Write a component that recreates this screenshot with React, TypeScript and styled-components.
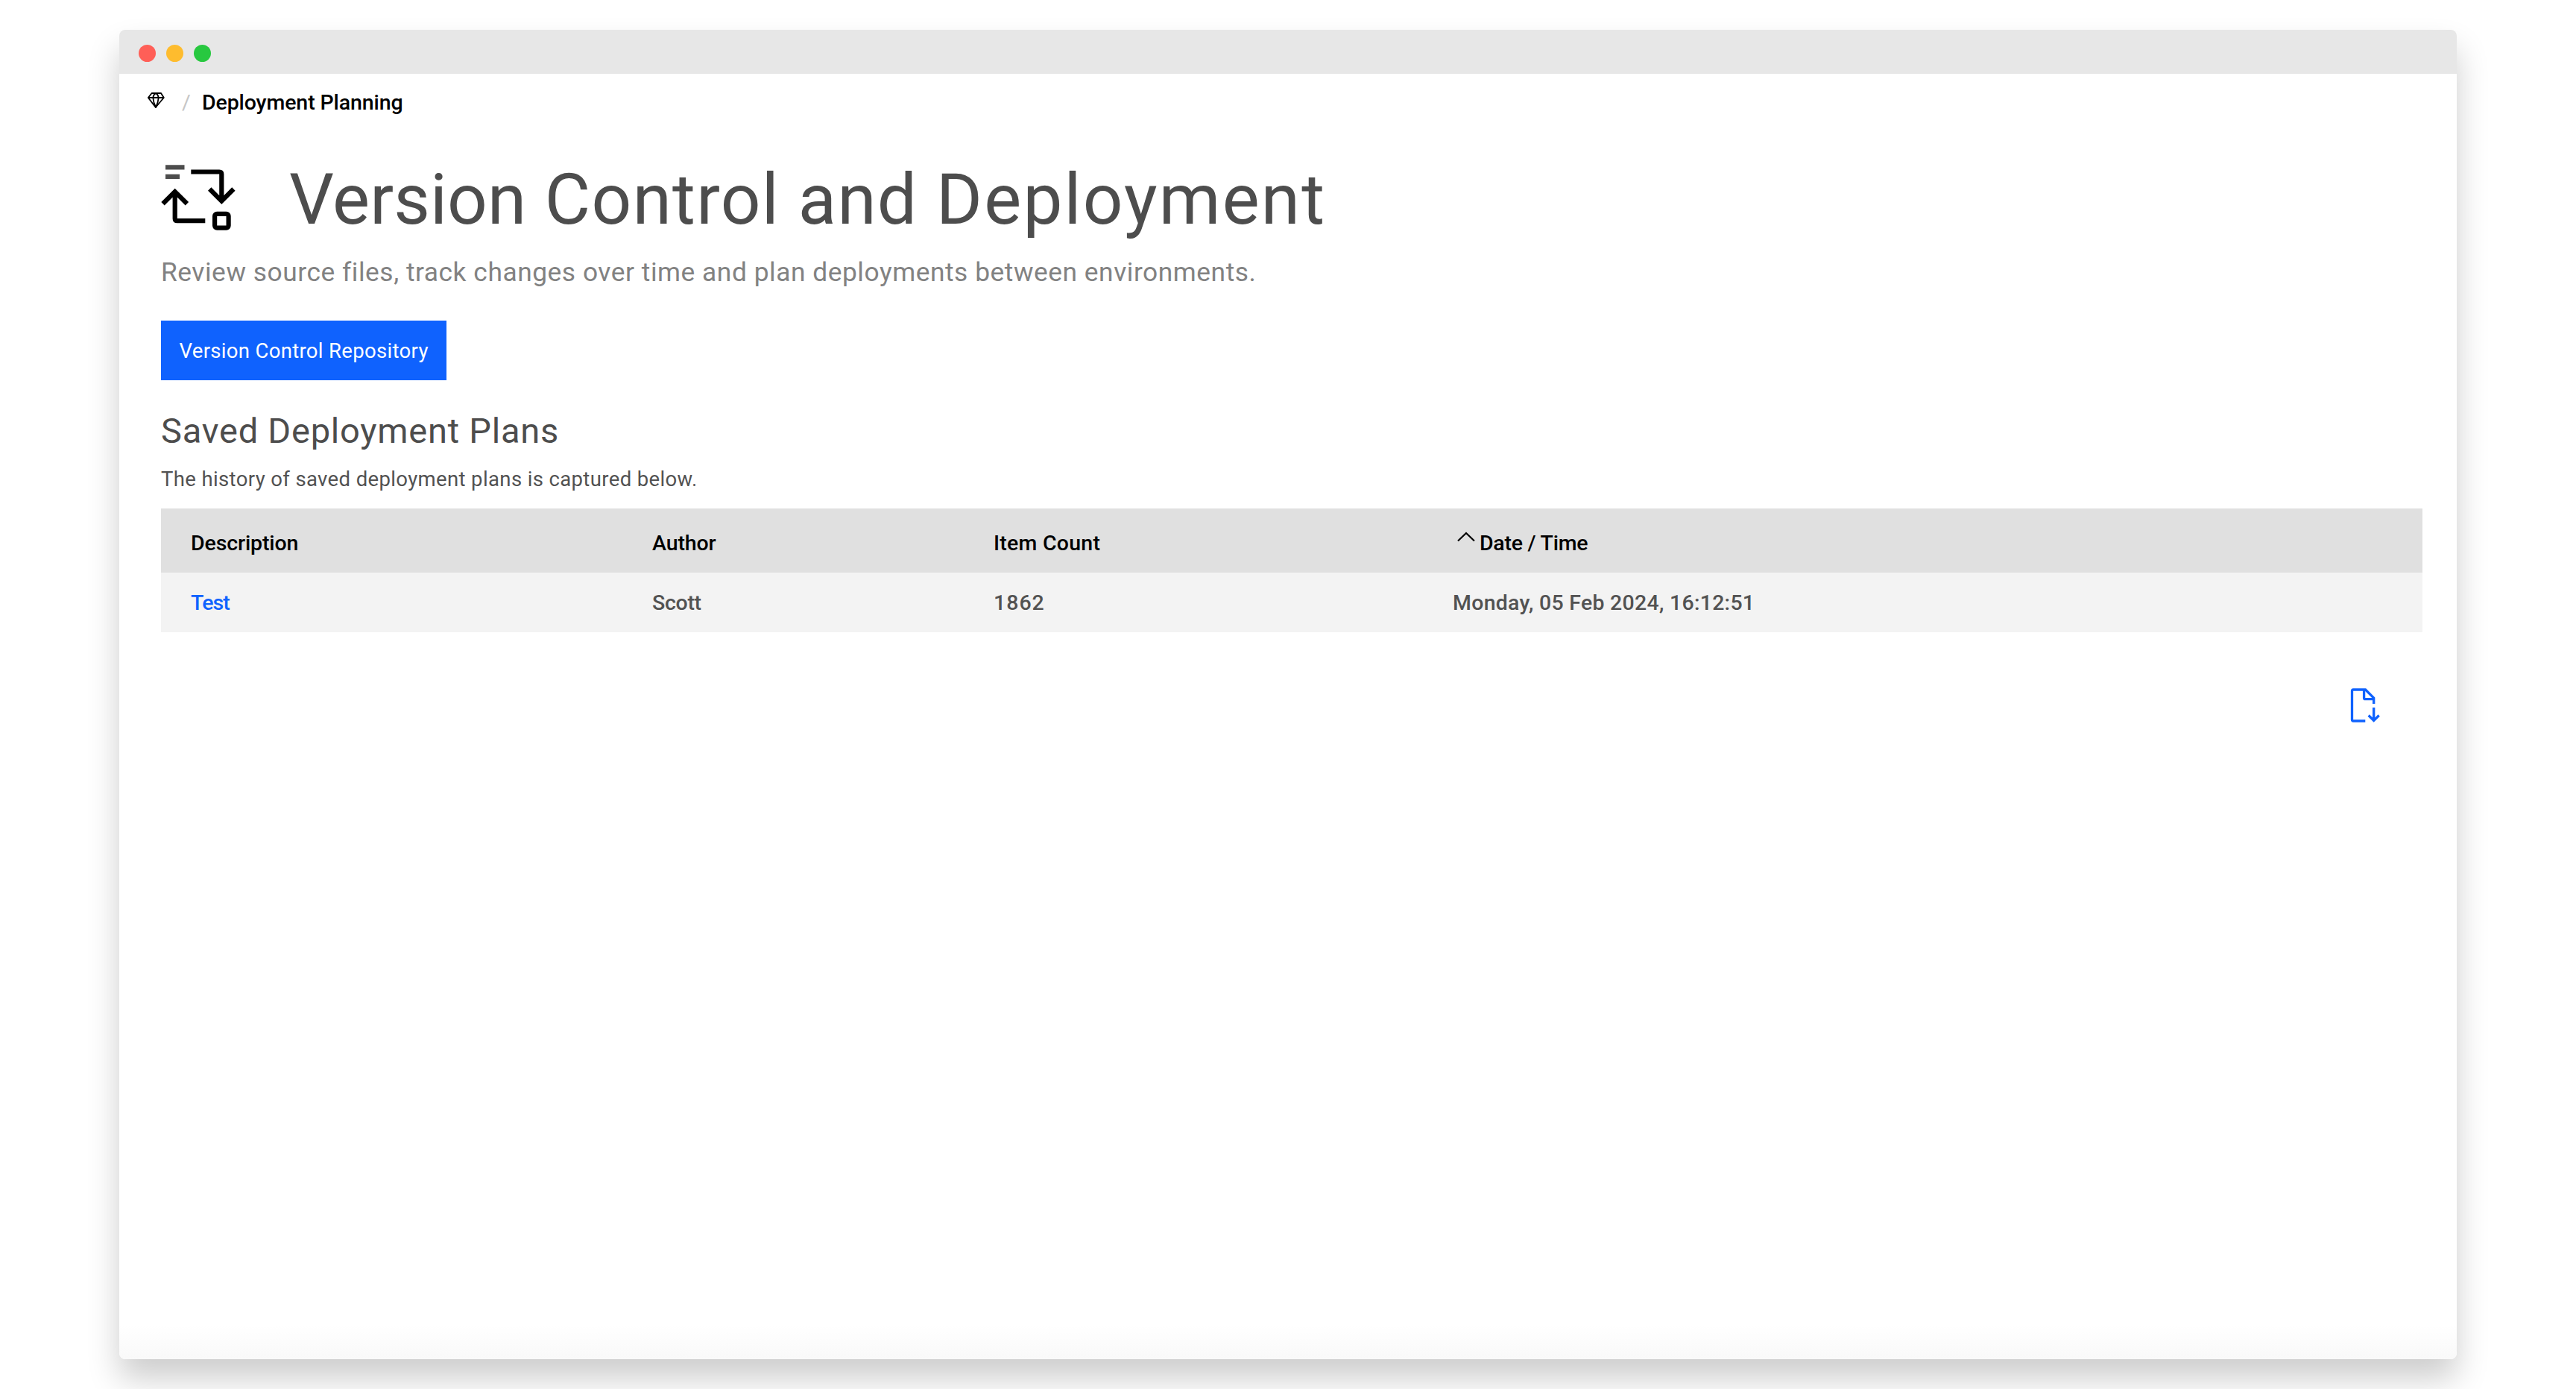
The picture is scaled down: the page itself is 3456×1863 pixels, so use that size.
import React from 'react';
import styled, { createGlobalStyle } from 'styled-components';

const GlobalStyle = createGlobalStyle`
  *, *::before, *::after { box-sizing: border-box; }
  body {
    margin: 0;
    background: #fff;
    font-family: Roboto, "Noto Sans", sans-serif;
    color: #000;
  }
`;

const Desktop = styled.div`
  height: 1863px;
  padding: 40px 160px;
  overflow: hidden;
`;

const Window = styled.main`
  height: 1783px;
  border-radius: 8px;
  background: linear-gradient(to top, #f9f9f9, #fff 46px);
  box-shadow: 0 26px 44px rgba(0, 0, 0, 0.2);
`;

const TitleBar = styled.header`
  display: flex;
  align-items: center;
  gap: 13.5px;
  height: 59px;
  padding: 4px 0 0 25.7px;
  border-radius: 8px 8px 0 0;
  background: #e7e7e7;
`;

const Light = styled.span<{ $fill: string }>`
  width: 23.5px;
  height: 23.5px;
  border-radius: 50%;
  background: ${(p) => p.$fill};
`;

const Breadcrumb = styled.nav`
  display: flex;
  height: 40px;
  margin-top: 18px;
  padding-left: 38px;
  font-size: 28.5px;
  line-height: 42px;
  white-space: nowrap;
`;

const Separator = styled.span`
  width: 27px;
  margin-left: 22px;
  color: #c6c6c6;
`;

const Crumb = styled.span`
  font-weight: 500;
  letter-spacing: -0.1px;
`;

const Content = styled.section`
  padding: 51px 46px 0 56px;
`;

const Heading = styled.div`
  display: flex;
  align-items: flex-start;
  height: 120px;
`;

const Title = styled.h1`
  margin: 0 0 0 72px;
  font-size: 94.3px;
  font-weight: 400;
  line-height: 120px;
  letter-spacing: 1.34px;
  color: #4d4d4d;
  white-space: nowrap;
`;

const TitleWord = styled.span<{ $track: number }>`
  letter-spacing: ${(p) => p.$track}px;
`;

const Subtitle = styled.p`
  margin: 12px 0 0;
  font-size: 35.3px;
  line-height: 50px;
  letter-spacing: 0.55px;
  color: #828282;
`;

const RepositoryButton = styled.button`
  display: block;
  width: 383px;
  height: 80px;
  margin: 40px 0 0;
  padding: 1px 0 0 24.5px;
  border: 0;
  background: #0f62fe;
  color: #fff;
  font: 400 27.5px/78px Roboto, sans-serif;
  letter-spacing: 0.32px;
  text-align: left;
`;

const SectionTitle = styled.h2`
  margin: 38px 0 0;
  font-size: 47px;
  font-weight: 400;
  line-height: 60px;
  letter-spacing: 0.78px;
  color: #4d4d4d;
`;

const SectionText = styled.p`
  margin: 15px 0 19px;
  font-size: 27.5px;
  line-height: 40px;
  letter-spacing: 0.37px;
  color: #525252;
`;

const Table = styled.div`
  font-size: 28.5px;
  font-weight: 500;
  white-space: nowrap;
`;

const Row = styled.div<{ $head?: boolean }>`
  display: grid;
  grid-template-columns: 619px 458px 616px 1fr;
  align-items: center;
  height: ${(p) => (p.$head ? 86 : 80)}px;
  padding: ${(p) => (p.$head ? 6 : 1)}px 0 0 40px;
  background: ${(p) => (p.$head ? '#e0e0e0' : '#f3f3f3')};
  color: ${(p) => (p.$head ? '#000' : '#525252')};
`;

const Cell = styled.span<{ $track?: number }>`
  display: flex;
  align-items: center;
  letter-spacing: ${(p) => p.$track ?? 0}px;
`;

const PlanLink = styled.a`
  color: #0f62fe;
`;

const SortCaret = styled.svg`
  width: 24px;
  height: 14px;
  margin: 0 6px 16px 6px;
`;

const Actions = styled.div`
  display: flex;
  justify-content: flex-end;
  margin-top: 74px;
  padding-right: 56px;
`;

const DiamondIcon = styled.svg`
  flex: none;
  width: 24px;
  height: 24px;
  margin-top: 6px;
`;

const DeployIcon = styled.svg`
  flex: none;
  width: 100px;
  height: 92px;
  margin-top: 12px;
`;

const FileIcon = styled.svg`
  width: 42px;
  height: 50px;
`;

const lights = ['#ff5f57', '#febc2e', '#28c840'];

const columns = [
  { label: 'Description', track: -0.12 },
  { label: 'Author', track: -0.1 },
  { label: 'Item Count', track: 0.25 },
  { label: 'Date / Time', track: -0.25, sorted: true },
];

export default function App() {
  return (
    <Desktop>
      <GlobalStyle />
      <Window>
        <TitleBar>
          {lights.map((fill) => (
            <Light key={fill} $fill={fill} />
          ))}
        </TitleBar>
        <Breadcrumb>
          <DiamondIcon viewBox="0 0 24 24" fill="none" stroke="#000" strokeWidth="1.8" strokeLinejoin="round">
            <path d="M5.8 2h12.4L22 8 11 21 1 8z" transform="translate(-.2 0)" />
            <path d="M1 8h20.6M11 2C8.6 3.5 7.5 5.5 7.3 8c.3 4.5 1.7 9 3.7 13 2-4 3.4-8.500 3.700-13-.2-2.500-1.300-4.500-3.700-6z" />
          </DiamondIcon>
          <Separator>/</Separator>
          <Crumb>Deployment Planning</Crumb>
        </Breadcrumb>
        <Content>
          <Heading>
            <DeployIcon viewBox="0 0 100 92" fill="none" stroke="#000" strokeWidth="6.2">
              <path d="M6 4.300h25.500M6 16.900h19" stroke="#4d4d4d" />
              <path d="M40.300 10.500h38q3 0 3 3V49M65.200 33.500l16.100 16.100 16.100-16.100" />
              <path d="M59.300 76.200H21.700q-3 0-3-3V38M2.500 53.300l16.200-16.200 16.200 16.200" />
              <rect x="72.100" y="66.800" width="18.500" height="18.800" rx="3" />
            </DeployIcon>
            <Title>
              <TitleWord $track={0.1}>Version</TitleWord> Control and{' '}
              <TitleWord $track={2.2}>Deployment</TitleWord>
            </Title>
          </Heading>
          <Subtitle>
            Review source files, track changes over time and plan deployments between environments.
          </Subtitle>
          <RepositoryButton>Version Control Repository</RepositoryButton>
          <SectionTitle>Saved Deployment Plans</SectionTitle>
          <SectionText>The history of saved deployment plans is captured below.</SectionText>
          <Table>
            <Row $head>
              {columns.map((column) => (
                <Cell key={column.label} $track={column.track}>
                  {column.sorted && (
                    <SortCaret viewBox="0 0 24 14" fill="none" stroke="#000" strokeWidth="2.2">
                      <path d="M1 12.500L12 2l11 10.500" />
                    </SortCaret>
                  )}
                  {column.label}
                </Cell>
              ))}
            </Row>
            <Row>
              <Cell $track={-0.9}>
                <PlanLink>Test</PlanLink>
              </Cell>
              <Cell $track={-0.3}>Scott</Cell>
              <Cell $track={1}>1862</Cell>
              <Cell $track={0.27}>Monday, 05 Feb 2024, 16:12:51</Cell>
            </Row>
          </Table>
          <Actions>
            <FileIcon viewBox="0 0 42 50" fill="none" stroke="#0f62fe" strokeWidth="3.3">
              <path d="M21.300 45H5q-1.500 0-1.500-1.500v-39Q3.500 3 5 3h16.500l11.200 11.200V22" />
              <path d="M19.600 3v11.200q0 1.500 1.500 1.500h11.600M32.700 27v17M25.700 37.500l7 7 7-7" />
            </FileIcon>
          </Actions>
        </Content>
      </Window>
    </Desktop>
  );
}
